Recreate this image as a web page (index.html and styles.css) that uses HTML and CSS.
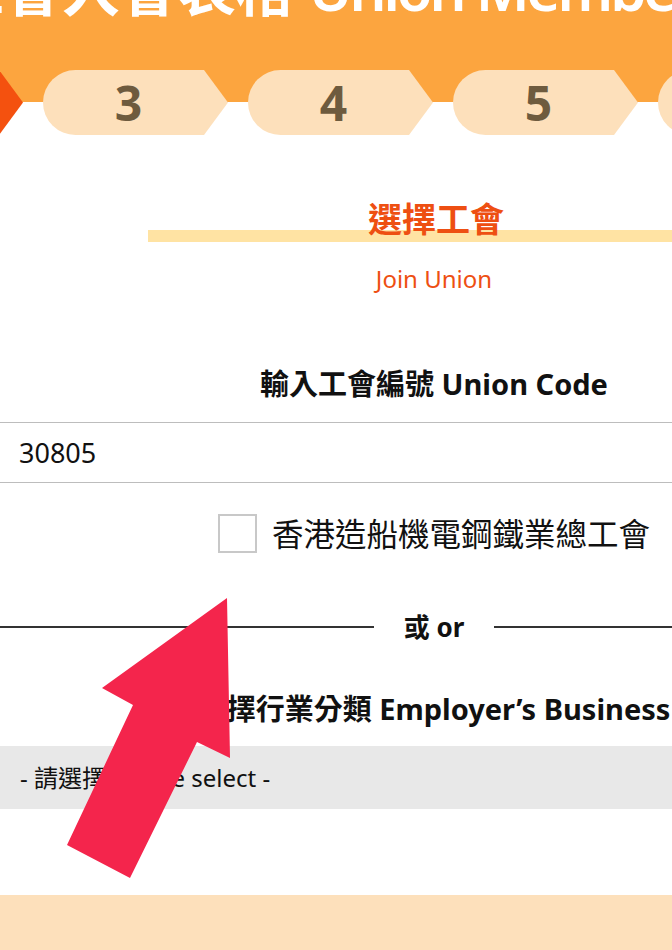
FILE: index.html
```html
<!DOCTYPE html>
<html lang="zh-Hant">
<head>
  <meta charset="UTF-8">
  <meta name="viewport" content="width=device-width, initial-scale=1.0">
  <title>工會入會表格 Union Membership Form</title>
  <link rel="stylesheet" href="styles.css">
</head>
<body>

  <div class="page">

    <header class="top">
      <h1 class="title">工會入會表格 <span class="title-en">Union Membership Form</span></h1>
      <ol class="steps">
        <li class="step done">1</li>
        <li class="step active">2</li>
        <li class="step">3</li>
        <li class="step">4</li>
        <li class="step">5</li>
        <li class="step">6</li>
      </ol>
    </header>

    <form id="unionForm">
      <h2 class="section-title">選擇工會</h2>
      <p class="section-sub">Join Union</p>

      <label class="field-label" for="unionCode">輸入工會編號 Union Code</label>
      <input class="text-input" type="text" id="unionCode" name="unionCode" value="30805">

      <label class="check-row">
        <span class="check-box"></span>
        <span class="check-text">香港造船機電鋼鐵業總工會</span>
      </label>

      <div class="divider"><span>或 or</span></div>

      <label class="field-label" for="business">選擇行業分類 Employer’s Business</label>
      <div class="select-box" id="business">- 請選擇 Please select -</div>
    </form>

    <div class="bottom-bar"></div>

    <!-- pointer drawn over the form -->
    <svg class="pointer" width="300" height="950" viewBox="0 0 300 950">
      <polygon points="227,598 230,758 197,742 130,878 67,845 133,705 102,688" fill="#f4254c"/>
    </svg>

  </div>

</body>
</html>
```

FILE: styles.css
```css
body {
  margin: 0;
  overflow: hidden;
  background-color: #fff;
  font-family: "Noto Sans", "Noto Sans CJK TC", sans-serif;
  color: #111;
}

.page {
  position: relative;
  width: 872px;
  margin-left: -2px;
}

.top {
  overflow: hidden;
  background: linear-gradient(#fca53f 102px, #fff 102px);
}

.title {
  margin: -40px 0 0 -52px;
  white-space: nowrap;
  font-size: 58px;
  line-height: 58px;
  font-weight: 600;
  color: #fff;
}

.title-en {
  letter-spacing: -3px;
}

.steps {
  display: flex;
  gap: 20px;
  list-style: none;
  margin: 52px 0 0 -365px;
  padding: 0;
}

.step {
  flex: 0 0 185px;
  height: 65px;
  box-sizing: border-box;
  padding-right: 14px;
  border-radius: 33px 0 0 33px;
  clip-path: polygon(0 0, calc(100% - 24px) 0, 100% 50%, calc(100% - 24px) 100%, 0 100%);
  background-color: #fde0bb;
  color: #6e5b3e;
  font-size: 48px;
  font-weight: 700;
  line-height: 65px;
  text-align: center;
}

.step.active,
.step.done {
  background-color: #f4510f;
  color: #fff;
}

form {
  margin: 0;
}

.section-title {
  margin: 60px 146px 0 150px;
  font-size: 34px;
  line-height: 48px;
  font-weight: 700;
  text-align: center;
  color: #ee4f12;
  background: linear-gradient(transparent 35px, #ffe3a3 35px, #ffe3a3 47px, transparent 47px);
}

.section-sub {
  margin: 20px 0 0;
  font-size: 24px;
  line-height: 32px;
  text-align: center;
  color: #ee4f12;
}

.field-label {
  display: block;
  margin-top: 71px;
  font-size: 29px;
  line-height: 36px;
  font-weight: 700;
  text-align: center;
  white-space: nowrap;
}

.text-input {
  display: block;
  width: 100%;
  height: 61px;
  margin-top: 20px;
  padding: 0 20px;
  box-sizing: border-box;
  border: 1px solid #bdbdbd;
  font-family: inherit;
  font-size: 27px;
  color: #111;
}

.check-row {
  display: flex;
  justify-content: center;
  align-items: center;
  gap: 15px;
  margin-top: 31px;
  height: 39px;
}

.check-box {
  width: 39px;
  height: 39px;
  box-sizing: border-box;
  border: 2px solid #c8c8c8;
}

.check-text {
  font-size: 31.5px;
  line-height: 39px;
}

.divider {
  display: flex;
  align-items: center;
  gap: 30px;
  margin-top: 56px;
  font-size: 26px;
  line-height: 36px;
  font-weight: 700;
}

.divider::before,
.divider::after {
  content: "";
  flex: 1;
  border-top: 2px solid #333;
}

.divider + .field-label {
  margin-top: 46px;
}

.select-box {
  height: 63px;
  margin-top: 19px;
  padding: 0 22px;
  background-color: #e8e8e8;
  font-size: 24px;
  line-height: 63px;
}

.bottom-bar {
  height: 60px;
  margin-top: 86px;
  background-color: #fde0bb;
}

.pointer {
  position: absolute;
  left: 2px;
  top: 0;
}
```
